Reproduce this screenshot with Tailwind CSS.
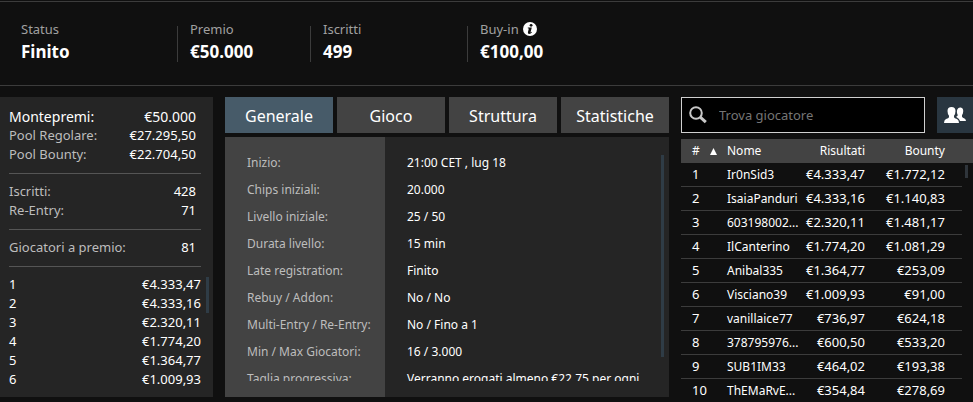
<!DOCTYPE html>
<html lang="it">
<head>
  <meta charset="UTF-8" />
  <meta name="viewport" content="width=device-width, initial-scale=1.0"/>
  <title>Dettagli torneo</title>
  <script src="https://cdn.jsdelivr.net/npm/@tailwindcss/browser@4"></script>
</head>
<body class="bg-[#101010] text-white font-['Noto_Sans',sans-serif] text-[13px] h-screen flex flex-col overflow-hidden">

  <!-- Summary bar -->
  <header class="mt-px border-y border-[#3c3c3c] pt-6 pb-[23px] pl-[21px]">
    <dl class="flex h-9">
      <div class="w-[156px] pb-1.5 flex flex-col justify-center">
        <dt class="text-[#a0a0a0] leading-[22px]">Status</dt>
        <dd class="text-[17px] font-bold leading-6">Finito</dd>
      </div>
      <div class="w-[133px] border-l border-[#3c3c3c] pl-3 pb-1.5 flex flex-col justify-center">
        <dt class="text-[#a0a0a0] leading-[22px]">Premio</dt>
        <dd class="text-[17px] font-bold leading-6">€50.000</dd>
      </div>
      <div class="w-[157px] border-l border-[#3c3c3c] pl-3 pb-1.5 flex flex-col justify-center">
        <dt class="text-[#a0a0a0] leading-[22px]">Iscritti</dt>
        <dd class="text-[17px] font-bold leading-6">499</dd>
      </div>
      <div class="border-l border-[#3c3c3c] pl-3 pb-1.5 flex flex-col justify-center">
        <dt class="text-[#a0a0a0] leading-[22px] flex items-center gap-1">Buy-in
          <svg class="size-3.5" viewBox="0 0 14 14" aria-hidden="true">
            <circle cx="7" cy="7" r="7" fill="#fff"/>
            <circle cx="8.1" cy="3.3" r="1.4" fill="#101010"/>
            <path d="M4.800 5.400h4L7.600 10q-.1.600.3.400l.8-.6.4.5Q7.700 12 6.200 12q-1.700 0-1.300-1.700L5.800 6.700q.1-.5-1-.5z" fill="#101010"/>
          </svg>
        </dt>
        <dd class="text-[17px] font-bold leading-6">€100,00</dd>
      </div>
    </dl>
  </header>

  <main class="flex-1 min-h-0 grid grid-cols-[213px_1fr_292px] gap-3 pt-[11px]">

    <!-- Prize pool -->
    <section class="bg-[#252525] mb-[5px] pl-[9px] pr-1 pt-[10px] min-h-0 overflow-hidden leading-[19px]">
      <dl class="mr-2 pr-[5px] text-[#bdbdbd]">
        <div class="flex justify-between text-white text-sm leading-[19px]"><dt>Montepremi:</dt><dd>€50.000</dd></div>
        <div class="flex justify-between"><dt>Pool Regolare:</dt><dd class="text-white">€27.295,50</dd></div>
        <div class="flex justify-between"><dt>Pool Bounty:</dt><dd class="text-white">€22.704,50</dd></div>
      </dl>
      <dl class="mr-2 mt-[9px] border-t border-[#555] pt-2 pr-[5px] text-[#bdbdbd]">
        <div class="flex justify-between"><dt>Iscritti:</dt><dd class="text-white">428</dd></div>
        <div class="flex justify-between"><dt>Re-Entry:</dt><dd class="text-white">71</dd></div>
      </dl>
      <dl class="mr-2 mt-[9px] border-t border-[#555] pt-2 pr-[5px] text-[#bdbdbd]">
        <div class="flex justify-between"><dt>Giocatori a premio:</dt><dd class="text-white">81</dd></div>
      </dl>
      <div class="mr-2 mt-[9px] border-t border-[#555]"></div>
      <div class="flex mt-2 gap-[5px]">
        <ol class="flex-1">
          <li class="flex justify-between"><span>1</span><span>€4.333,47</span></li>
          <li class="flex justify-between"><span>2</span><span>€4.333,16</span></li>
          <li class="flex justify-between"><span>3</span><span>€2.320,11</span></li>
          <li class="flex justify-between"><span>4</span><span>€1.774,20</span></li>
          <li class="flex justify-between"><span>5</span><span>€1.364,77</span></li>
          <li class="flex justify-between"><span>6</span><span>€1.009,93</span></li>
        </ol>
        <div class="w-[3px] h-9 mt-0.5 bg-[#2f3c46]"></div>
      </div>
    </section>

    <!-- Tournament details -->
    <section class="min-h-0 flex flex-col mb-[5px]">
      <nav class="grid grid-cols-4 gap-1 text-base">
        <button class="h-9 pt-0.5 bg-[#475b69]">Generale</button>
        <button class="h-9 pt-0.5 bg-[#434343]">Gioco</button>
        <button class="h-9 pt-0.5 bg-[#434343]">Struttura</button>
        <button class="h-9 pt-0.5 bg-[#434343]">Statistiche</button>
      </nav>
      <div class="mt-1 flex-1 min-h-0 flex bg-[linear-gradient(to_right,#434343_160px,#252525_160px)] pt-3 pb-4 pr-[5px] text-xs">
        <dl class="flex-1 overflow-hidden grid grid-cols-[160px_1fr] auto-rows-[27px] items-center content-start whitespace-nowrap">
          <dt class="pl-[22px] text-[#bdbdbd]">Inizio:</dt><dd class="pl-[22px]">21:00 CET , lug 18</dd>
          <dt class="pl-[22px] text-[#bdbdbd]">Chips iniziali:</dt><dd class="pl-[22px]">20.000</dd>
          <dt class="pl-[22px] text-[#bdbdbd]">Livello iniziale:</dt><dd class="pl-[22px]">25 / 50</dd>
          <dt class="pl-[22px] text-[#bdbdbd]">Durata livello:</dt><dd class="pl-[22px]">15 min</dd>
          <dt class="pl-[22px] text-[#bdbdbd]">Late registration:</dt><dd class="pl-[22px]">Finito</dd>
          <dt class="pl-[22px] text-[#bdbdbd]">Rebuy / Addon:</dt><dd class="pl-[22px]">No / No</dd>
          <dt class="pl-[22px] text-[#bdbdbd]">Multi-Entry / Re-Entry:</dt><dd class="pl-[22px]">No / Fino a 1</dd>
          <dt class="pl-[22px] text-[#bdbdbd]">Min / Max Giocatori:</dt><dd class="pl-[22px]">16 / 3.000</dd>
          <dt class="pl-[22px] text-[#bdbdbd]">Taglia progressiva:</dt><dd class="pl-[22px]">Verranno erogati almeno €22,75 per ogni</dd>
        </dl>
        <div class="w-[3px] mt-1.5 mb-6 bg-[#2f3c46]"></div>
      </div>
    </section>

    <!-- Players -->
    <section class="min-h-0 overflow-hidden">
      <div class="flex gap-3">
        <label class="flex-1 h-9 bg-black border border-[#d0d0d0] flex items-center pl-[7px] gap-3">
          <svg class="size-[18px] shrink-0" viewBox="0 0 18 18" fill="none" stroke="#c8c8c8" aria-hidden="true">
            <circle cx="7" cy="7" r="5.800" stroke-width="2"/>
            <path d="M11.200 11.200l5.600 5" stroke-width="3"/>
          </svg>
          <input type="text" aria-label="Trova giocatore" placeholder="Trova giocatore" class="w-full min-w-0 pt-0.5 bg-transparent outline-none placeholder:text-[#757575]">
        </label>
        <button aria-label="Giocatori" class="size-9 bg-[#293640] flex items-center justify-center">
          <svg class="w-[22px] h-4" viewBox="0 0 22 16" fill="#fff" aria-hidden="true">
            <path d="M14.500 1q1-.8 2.200-.5 2.800.5 2.500 4-.2 2.500-1.200 3.500v1.700q.5 1 2.500 1.700 1.300.6 1.500 2.600h-6q-.6-2.500-3-3.500-1-.4-.6-1 1.400-.4 1.300-1.500-1-1.500-.8-4 .2-2 1.600-3z"/>
            <path d="M7.500 0q4 0 4 4 0 2.800-1.500 4.700v1.600q.4.900 3 1.700 2 .8 2 4H0q0-3.200 2-4 2.600-.8 3-1.700V8.700Q3.500 6.800 3.500 4q0-4 4-4z"/>
          </svg>
        </button>
      </div>
      <div class="mt-1.5 bg-[linear-gradient(#434343_24px,transparent_24px)] flex gap-[3px]">
        <table class="w-[281px] table-fixed text-right whitespace-nowrap">
          <thead>
            <tr class="h-6 text-xs">
              <th class="w-[46px] pl-[11px] font-normal text-left">#<svg class="inline ml-2.5 size-[7px]" viewBox="0 0 7 7" fill="#fff" aria-hidden="true"><path d="M3.500 0L7 7H0z"/></svg></th>
              <th class="w-[74px] font-normal text-left">Nome</th>
              <th class="w-16 font-normal">Risultati</th>
              <th class="pr-[17px] font-normal">Bounty</th>
            </tr>
          </thead>
          <tbody class="leading-[23px]">
            <tr class="border-b border-[#3c3c3c]"><td class="pl-[11px] text-left">1</td><td class="text-left text-xs leading-[23px]">Ir0nSid3</td><td>€4.333,47</td><td class="pr-[17px]">€1.772,12</td></tr>
            <tr class="border-b border-[#3c3c3c]"><td class="pl-[11px] text-left">2</td><td class="text-left text-xs leading-[23px]">IsaiaPanduri</td><td>€4.333,16</td><td class="pr-[17px]">€1.140,83</td></tr>
            <tr class="border-b border-[#3c3c3c]"><td class="pl-[11px] text-left">3</td><td class="text-left text-xs leading-[23px]">603198002...</td><td>€2.320,11</td><td class="pr-[17px]">€1.481,17</td></tr>
            <tr class="border-b border-[#3c3c3c]"><td class="pl-[11px] text-left">4</td><td class="text-left text-xs leading-[23px]">IlCanterino</td><td>€1.774,20</td><td class="pr-[17px]">€1.081,29</td></tr>
            <tr class="border-b border-[#3c3c3c]"><td class="pl-[11px] text-left">5</td><td class="text-left text-xs leading-[23px]">Anibal335</td><td>€1.364,77</td><td class="pr-[17px]">€253,09</td></tr>
            <tr class="border-b border-[#3c3c3c]"><td class="pl-[11px] text-left">6</td><td class="text-left text-xs leading-[23px]">Visciano39</td><td>€1.009,93</td><td class="pr-[17px]">€91,00</td></tr>
            <tr class="border-b border-[#3c3c3c]"><td class="pl-[11px] text-left">7</td><td class="text-left text-xs leading-[23px]">vanillaice77</td><td>€736,97</td><td class="pr-[17px]">€624,18</td></tr>
            <tr class="border-b border-[#3c3c3c]"><td class="pl-[11px] text-left">8</td><td class="text-left text-xs leading-[23px]">378795976...</td><td>€600,50</td><td class="pr-[17px]">€533,20</td></tr>
            <tr class="border-b border-[#3c3c3c]"><td class="pl-[11px] text-left">9</td><td class="text-left text-xs leading-[23px]">SUB1IM33</td><td>€464,02</td><td class="pr-[17px]">€193,38</td></tr>
            <tr class="border-b border-[#3c3c3c]"><td class="pl-[11px] text-left">10</td><td class="text-left text-xs leading-[23px]">ThEMaRvE...</td><td>€354,84</td><td class="pr-[17px]">€278,69</td></tr>
          </tbody>
        </table>
        <div class="w-[3px] h-[13px] mt-[26px] bg-[#2f353b]"></div>
      </div>
    </section>

  </main>
</body>
</html>
